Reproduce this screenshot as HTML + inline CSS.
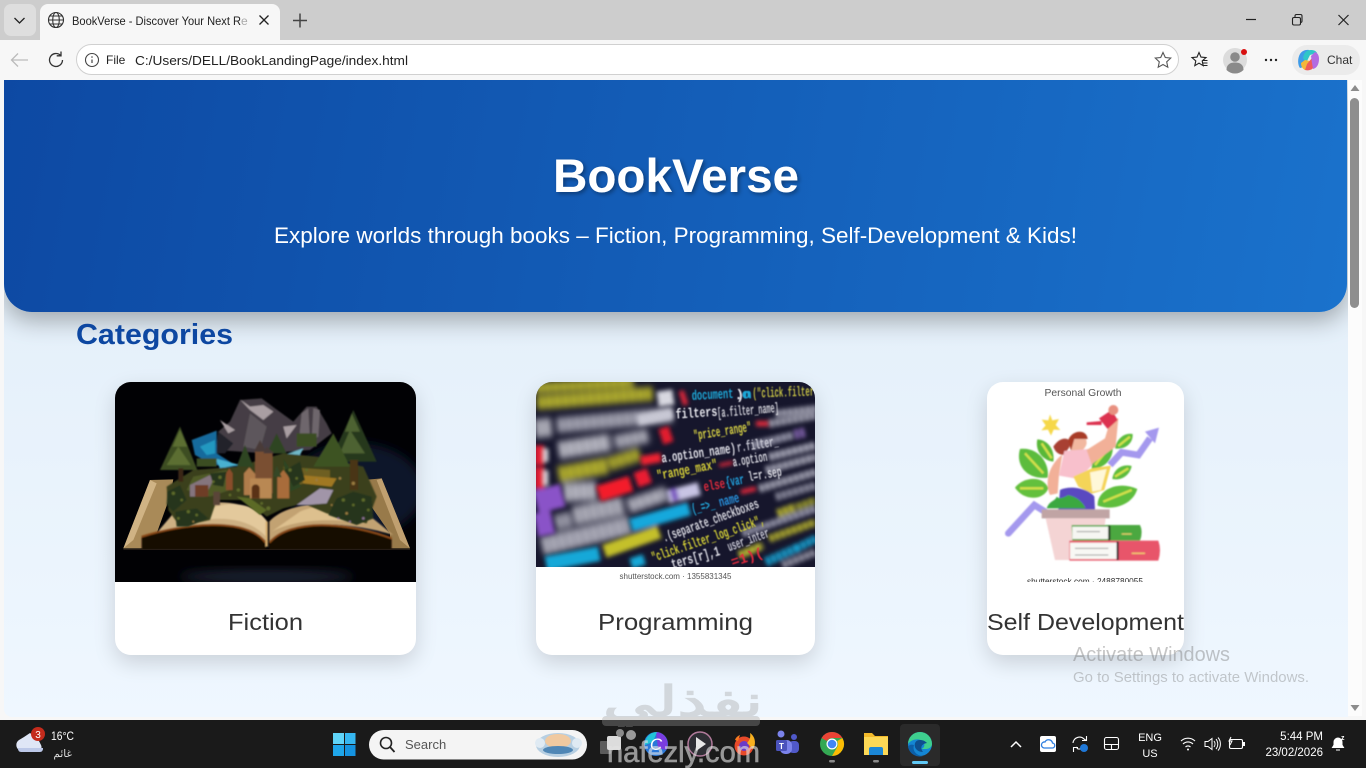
<!DOCTYPE html>
<html lang="en"><head><meta charset="utf-8"><title>BookVerse - Discover Your Next Read</title>
<style>
html,body{margin:0;padding:0;width:1366px;height:768px;overflow:hidden;background:#f7f7f7}
div{position:absolute;box-sizing:border-box}
svg{position:absolute;left:0;top:0}
text{font-family:"Liberation Sans","Noto Sans CJK SC",sans-serif}
.m text,text.m{font-family:"Liberation Mono",monospace;font-weight:700}
</style></head><body>
<div style="left:0;top:0;width:1366px;height:40px;background:#cdcdcd"></div>
<div style="left:0;top:40px;width:1366px;height:40px;background:#f7f7f7"></div>
<div style="left:4px;top:80px;width:1344px;height:637px;background:linear-gradient(180deg,#dfecf7,#eff7ff);border-radius:0 0 0 8px;overflow:hidden">
  <div style="left:0;top:0;width:1343px;height:232px;background:linear-gradient(100deg,#0d49a3,#1a72cc);border-radius:0 0 28px 28px;box-shadow:0 9px 24px rgba(0,0,0,.3)"></div>
</div>
<div style="left:115px;top:382px;width:301px;height:273px;background:#fff;border-radius:16px;box-shadow:0 8px 22px rgba(0,0,0,.15)"></div>
<div style="left:536px;top:382px;width:279px;height:273px;background:#fff;border-radius:16px;box-shadow:0 8px 22px rgba(0,0,0,.15)"></div>
<div style="left:987px;top:382px;width:197px;height:273px;background:#fff;border-radius:16px;box-shadow:0 8px 22px rgba(0,0,0,.15)"></div>
<div style="left:0;top:717px;width:1366px;height:3px;background:#f7f7f7"></div>
<div style="left:0;top:720px;width:1366px;height:48px;background:#1a1a1a"></div>

<svg width="1366" height="768" viewBox="0 0 1366 768">
<defs>
<clipPath id="c1"><path d="M115 582V398a16 16 0 0 1 16-16h269a16 16 0 0 1 16 16v184z"/></clipPath>
<clipPath id="c2"><path d="M536 567V398a16 16 0 0 1 16-16h247a16 16 0 0 1 16 16v169z"/></clipPath>
<clipPath id="c3"><rect x="987" y="382" width="197" height="200"/></clipPath>
<filter id="b0" x="-5%" y="-10%" width="110%" height="120%"><feGaussianBlur stdDeviation="2.500"/></filter>
<filter id="b1" x="-5%" y="-5%" width="110%" height="110%"><feGaussianBlur stdDeviation="2"/></filter>
<filter id="b2" x="-5%" y="-20%" width="110%" height="140%"><feGaussianBlur stdDeviation="10"/></filter>
<filter id="b3" x="-5%" y="-20%" width="110%" height="140%"><feGaussianBlur stdDeviation="6"/></filter>
<filter id="b4" x="-5%" y="-20%" width="110%" height="140%"><feGaussianBlur stdDeviation="1.500"/></filter>
<filter id="b9" x="-30%" y="-30%" width="160%" height="160%"><feGaussianBlur stdDeviation="16"/></filter>
<filter id="ts" x="-10%" y="-20%" width="120%" height="150%"><feDropShadow dx="2" dy="2" stdDeviation="2" flood-color="#000" flood-opacity=".35"/></filter>
</defs>

<!-- tab strip -->
<rect x="4" y="4" width="32" height="32" rx="7" fill="#dedede"/>
<path d="M14.500 18l5 5 5-5" fill="none" stroke="#222" stroke-width="1.300"/>
<path d="M40 40V12a8 8 0 0 1 8-8h224a8 8 0 0 1 8 8v28z" fill="#f7f7f7"/>
<g fill="none" stroke="#333" stroke-width="1.100"><circle cx="56" cy="20" r="7.500"/><ellipse cx="56" cy="20" rx="3.300" ry="7.500"/><path d="M48.500 20h15M49.500 16h13M49.500 24h13"/></g>
<text x="72" y="25" font-size="12" fill="#222" textLength="169" lengthAdjust="spacingAndGlyphs">BookVerse - Discover Your Next R</text>
<text x="241" y="25" font-size="12" fill="#aaa">e</text>
<path d="M259.500 15.500l9 9m0-9l-9 9" stroke="#222" stroke-width="1.300"/>
<path d="M300 13.500v14M293 20.500h14" stroke="#444" stroke-width="1.500"/>
<path d="M1246 19.500h10" stroke="#222" stroke-width="1.200"/>
<g fill="none" stroke="#222" stroke-width="1.100"><rect x="1292.500" y="17.500" width="8" height="7.500" rx="1.500"/><path d="M1295 17v-1a1.500 1.500 0 0 1 1.500-1.500h4a1.500 1.500 0 0 1 1.500 1.500v5a1.500 1.500 0 0 1-1.500 1.500"/></g>
<path d="M1338.500 15l10 10m0-10l-10 10" stroke="#222" stroke-width="1.200"/>

<!-- toolbar -->
<path d="M28 60H12m6-6.500L11.500 60l6.500 6.500" fill="none" stroke="#bbb" stroke-width="1.300"/>
<path d="M62.500 60a6.500 6.500 0 1 1-2-4.700M61 51.500v4.300h-4.300" fill="none" stroke="#333" stroke-width="1.300"/>
<rect x="76.500" y="44.500" width="1102" height="30" rx="15" fill="#fff" stroke="#d0d0d0"/>
<g fill="none" stroke="#444" stroke-width="1.100"><circle cx="92" cy="60" r="6.500"/></g><path d="M92 59.500v3.500" stroke="#444" stroke-width="1.200"/><circle cx="92" cy="57" r=".8" fill="#444"/>
<text x="106" y="64" font-size="12" fill="#222">File</text>
<text x="135" y="65" font-size="13" fill="#222" textLength="273" lengthAdjust="spacingAndGlyphs">C:/Users/DELL/BookLandingPage/index.html</text>
<path d="M1163 52.500l2.300 5 5.400.6-4 3.700 1.100 5.400-4.800-2.700-4.800 2.700 1.100-5.400-4-3.700 5.400-.6z" fill="none" stroke="#555" stroke-width="1.100"/>
<path d="M1199 52.500l2 4.600 5 .5-3.800 3.300 1 4.800-4.200-2.500-4.200 2.500 1-4.800-3.800-3.300 5-.5zM1203 60.500h4.500M1203 63h4.500M1203 65.500h4.500" fill="none" stroke="#222" stroke-width="1.100"/>
<circle cx="1235" cy="60" r="12" fill="#dcdcdc"/><circle cx="1235" cy="57" r="4.800" fill="#8a8a8a"/><path d="M1226.500 70c0-5.500 3.500-7.500 8.500-7.500s8.500 2 8.500 7.500a12 12 0 0 1-17 0z" fill="#8a8a8a"/>
<circle cx="1244" cy="52" r="3" fill="#d81010"/>
<circle cx="1266" cy="60" r="1.200" fill="#222"/><circle cx="1271" cy="60" r="1.200" fill="#222"/><circle cx="1276" cy="60" r="1.200" fill="#222"/>
<rect x="1292" y="45" width="68" height="30" rx="15" fill="#ebebeb"/>
<path d="M1300 68c-2.500-3-2.500-10 0-14 2-3 5-4.500 9-4l-4 9-1 8z" fill="#3f9be8"/><path d="M1303 58c1-5 3-8 8-8 3 0 5 1 6 3l-7 2-4 8z" fill="#2fc6c8"/><path d="M1301 63c0 4 2 6 4 7l3-1 2-8-5-1z" fill="#f4b63a"/><path d="M1305 70c4 1 8 0 10-5l-3-7-5 6z" fill="#ef5a5a"/><path d="M1311 56l4-4c3 1 4 4 4 7 0 5-2 9-6 10l-1-6z" fill="#b36ae2"/>
<text x="1327" y="64" font-size="12" fill="#333">Chat</text>

<!-- scrollbar -->
<rect x="1348" y="80" width="14" height="636" fill="#fcfcfc"/>
<path d="M1355 85l4.500 6h-9z" fill="#8c8c8c"/><path d="M1355 711l4.500-6h-9z" fill="#8c8c8c"/>
<rect x="1350" y="98" width="9" height="210" rx="4.500" fill="#8e8e8e"/>

<!-- hero text -->
<text x="553" y="192" font-size="47" font-weight="700" fill="#fff" textLength="246" lengthAdjust="spacingAndGlyphs" filter="url(#ts)">BookVerse</text>
<text x="274" y="243" font-size="22" fill="#fff" textLength="803" lengthAdjust="spacingAndGlyphs">Explore worlds through books – Fiction, Programming, Self-Development &amp; Kids!</text>
<text x="76" y="344" font-size="29" font-weight="700" fill="#0d47a1" textLength="157" lengthAdjust="spacingAndGlyphs">Categories</text>

<!-- fiction image -->
<g clip-path="url(#c1)">
<rect x="115" y="382" width="301" height="200" fill="#010104"/>
<g transform="translate(150 390) scale(.3333)">
<ellipse cx="620" cy="300" rx="200" ry="140" fill="#10182c" filter="url(#b9)"/>
<ellipse cx="350" cy="560" rx="260" ry="20" fill="#1a2232" filter="url(#b9)"/>
<!-- book -->
<path d="M-80 475L0 270 70 268 60 320 20 430-20 445V475z" fill="#a98a58"/>
<path d="M780 475L695 265 640 270 650 330 720 430 720 475z" fill="#987a4a"/>
<path d="M-80 475L0 270 20 280-50 450z" fill="#d0b384"/>
<path d="M780 475L695 265 680 270 750 450z" fill="#c0a070"/>
<g filter="url(#b0)">
<path d="M15 435L70 370C150 325 300 320 352 395L350 455C280 385 120 395 15 435z" fill="#cdb083"/>
<path d="M150 370C220 330 310 330 350 395L348 440C300 385 210 375 120 398z" fill="#e3c99c"/>
<path d="M730 435L650 370C560 325 410 335 358 395L358 455C420 385 600 395 730 435z" fill="#c2a272"/>
<path d="M450 365C520 335 600 350 640 400 560 385 440 385 365 425z" fill="#ddc08e"/>
<path d="M-25 478V440C100 400 290 380 347 458V478zM725 478V445C590 395 420 385 358 458V478z" fill="#160a04"/>
<path d="M-25 440C100 400 290 380 347 458M725 445C590 395 420 385 358 458" fill="none" stroke="#8a4a18" stroke-width="6"/>
<path d="M350 395V470" stroke="#d8b070" stroke-width="7"/>
</g>
<path d="M-80 478H780" stroke="#2a2018" stroke-width="3"/>
<g filter="url(#b0)">
<!-- mountains -->
<path d="M198 180L205 125 240 95 270 30 335 25 375 55 430 95 470 50 500 50 530 100 545 130 480 180 350 190z" fill="#443e44"/>
<path d="M270 28L300 50 340 45 370 65 340 90 300 60zM210 90L255 120 235 130zM400 110L440 105 410 145z" fill="#a99ea2"/>
<path d="M455 70L475 55 480 150 445 170zM490 55L510 60 505 140 485 150z" fill="#6e666c"/>
<path d="M205 125L250 160 225 190 198 190z" fill="#23212a"/>
<path d="M300 70L350 110 330 180 280 170z" fill="#5d565c"/>
<!-- water -->
<path d="M125 150L200 122 200 190 260 228 190 225 135 195z" fill="#176a9c"/>
<path d="M150 170L195 150 195 190 170 195z" fill="#2498c0"/>
<path d="M195 205L270 225 210 235z" fill="#4ab0d0"/>
<path d="M370 205L460 175 440 215 390 225z" fill="#6fb8c8"/>
<!-- land -->
<path d="M50 290L130 240 260 230 400 190 500 200 640 230 680 320 650 400 530 370 460 340 400 355 350 380 290 330 200 330 180 390 90 410 55 360z" fill="#3a3f1a"/>
<path d="M130 260L230 240 240 300 180 320 110 300z" fill="#4f5a26"/>
<path d="M400 230L540 240 540 290 460 280 410 300z" fill="#6e5e20"/>
<path d="M450 255L560 265 545 290 460 280z" fill="#a07822"/>
<path d="M120 285L180 255 190 270 165 320 120 320z" fill="#85747e"/>
<path d="M440 345L510 295 550 300 530 340 470 345z" fill="#a195a8"/>
<path d="M260 320L300 325 350 360 330 375z" fill="#5c6a28"/>
<!-- trees -->
<path d="M90 110L142 240 30 240z" fill="#3e4e24"/>
<path d="M90 120L112 170 68 170zM85 170L122 225 50 225z" fill="#5c6e30"/>
<path d="M85 235h15v40H85z" fill="#3a2812"/>
<path d="M610 60L680 215 540 215z" fill="#27391e"/>
<path d="M605 70L630 125 585 125zM600 120L645 190 570 190z" fill="#4e6230"/>
<path d="M600 210h24v90h-24z" fill="#4a3416"/>
<path d="M550 130L600 230 490 230z" fill="#3c5224"/>
<path d="M380 130L410 190 350 190zM285 165L310 230 260 230zM400 205L455 290 410 310z" fill="#2e4420"/>
<path d="M140 205h60v25h-60zM440 130h60v40h-60z" fill="#3a4e24"/>
<!-- castle -->
<path d="M315 185H368V310H315z" fill="#7a5030"/>
<path d="M330 150L348 185H312zM350 170L372 190H340z" fill="#4a3a38"/>
<path d="M282 250L298 232 316 252V315H282z" fill="#b07c4c"/>
<path d="M300 265H365V325H300z" fill="#b98852"/>
<path d="M305 325V295a12 12 0 0 1 24 0V325z" fill="#5a3018"/>
<path d="M382 262L400 240 418 262V325H382z" fill="#a86c3a"/>
<path d="M370 260L380 225 395 262z" fill="#354626"/>
<path d="M228 250L238 235 248 250V300H228z" fill="#8a4e2c"/>
<path d="M135 285h40v35h-40z" fill="#6e3c28"/>
<path d="M190 305h20v40h-20z" fill="#5a4438"/>
<!-- foliage clusters -->
<g fill="#26351a"><path d="M52 305L90 285 110 330 70 365 50 345z"/><path d="M75 365L140 355 175 385 115 410 80 410z"/><path d="M535 375L560 325 610 305 665 320 670 385 620 405z"/><path d="M405 240L450 215 465 270 430 290z"/><path d="M180 250L230 245 220 290 190 285z"/></g>
<g fill="#5e6c2a"><circle cx="70" cy="310" r="5"/><circle cx="95" cy="330" r="4"/><circle cx="115" cy="365" r="5"/><circle cx="140" cy="375" r="4"/><circle cx="85" cy="385" r="4"/><circle cx="210" cy="262" r="5"/><circle cx="190" cy="275" r="4"/><circle cx="580" cy="330" r="5"/><circle cx="610" cy="345" r="4"/><circle cx="640" cy="330" r="5"/><circle cx="655" cy="360" r="4"/><circle cx="420" cy="240" r="5"/><circle cx="440" cy="265" r="4"/><circle cx="265" cy="300" r="5"/><circle cx="355" cy="355" r="6"/><circle cx="335" cy="340" r="4"/><circle cx="470" cy="240" r="4"/><circle cx="240" cy="315" r="4"/></g>
<g fill="#9a7c40"><circle cx="590" cy="370" r="4"/><circle cx="610" cy="280" r="5"/><circle cx="570" cy="265" r="4"/><circle cx="130" cy="395" r="3"/><circle cx="500" cy="270" r="4"/><circle cx="545" cy="345" r="3"/></g>
<g fill="#8a7090"><circle cx="640" cy="385" r="4"/><circle cx="600" cy="395" r="3"/><circle cx="565" cy="385" r="3"/></g>
</g>
</g>
</g>
<text x="265.500" y="630" text-anchor="middle" font-size="23" fill="#333" textLength="75" lengthAdjust="spacingAndGlyphs">Fiction</text>

<!-- code image -->
<g clip-path="url(#c2)">
<rect x="536" y="382" width="279" height="186" fill="#16162c"/>
<g transform="translate(536 382) scale(.3333)" fill="none">
<g filter="url(#b2)" stroke-dasharray="19 6">
<path d="M0 18L290 0" stroke="#d6d22e" stroke-width="32"/>
<path d="M5 62L350 35" stroke="#d4d02c" stroke-width="42"/>
<path d="M0 140L50 135" stroke="#d4d4dc" stroke-width="56"/>
<path d="M65 130L410 98" stroke="#c0c0cc" stroke-width="46"/>
<path d="M70 205L225 180" stroke="#dadae2" stroke-width="52"/>
<path d="M240 180L340 160" stroke="#c8c8d2" stroke-width="42"/>
<path d="M70 278L215 250" stroke="#d4d02e" stroke-width="50"/>
<path d="M220 245L315 215" stroke="#c8c42c" stroke-width="42"/>
<path d="M85 332L180 326" stroke="#dadae2" stroke-width="56"/>
<path d="M115 402L265 370" stroke="#cfcfd8" stroke-width="56"/>
<path d="M60 422L110 410" stroke="#b8b8c4" stroke-width="46"/>
<path d="M280 372L390 335" stroke="#d2d2dc" stroke-width="44"/>
<path d="M20 492L280 430" stroke="#cdcdd8" stroke-width="56"/>
</g>
<g filter="url(#b3)">
<path d="M0 360L80 340" stroke="#8a52c8" stroke-width="70"/>
<path d="M0 430L50 420" stroke="#8a52c8" stroke-width="70"/>
<path d="M10 190V250M10 255V320" stroke="#e21e34" stroke-width="30"/>
<path d="M30 200V240M30 265V310" stroke="#d8d8de" stroke-width="14"/>
<path d="M30 545L190 515" stroke="#18a8d8" stroke-width="44"/>
<path d="M285 545L325 532" stroke="#18a8d8" stroke-width="32"/>
<path d="M188 335L285 305" stroke="#f41c2c" stroke-width="48"/>
<path d="M300 295L340 280" stroke="#ea1f30" stroke-width="46"/>
<path d="M315 237L375 226" stroke="#ee2030" stroke-width="28"/>
<path d="M375 165L405 155" stroke="#e21e2e" stroke-width="48"/>
<path d="M435 50L450 45" stroke="#e0263a" stroke-width="44"/>
<path d="M365 52L412 45" stroke="#d8d8e0" stroke-width="46"/>
<path d="M285 430L460 380" stroke="#18a8dc" stroke-width="40"/>
<path d="M205 508L370 450" stroke="#c4c02c" stroke-width="40"/>
<path d="M395 345L490 320" stroke="#c8c4e4" stroke-width="40"/>
<path d="M405 340L425 335" stroke="#7a58c0" stroke-width="40"/>
<path d="M305 115L410 95" stroke="#c8c8d4" stroke-width="32"/>
<path d="M660 125L700 125" stroke="#e02a3c" stroke-width="16"/>
<path d="M615 330L660 320" stroke="#e0263a" stroke-width="14"/>
<path d="M550 250L590 242" stroke="#e0263a" stroke-width="10"/>
</g>
<g filter="url(#b3)" stroke-dasharray="14 4">
<path d="M720 95L840 80" stroke="#a8a8b8" stroke-width="22"/>
<path d="M700 125L840 100" stroke="#a4a4b4" stroke-width="24"/>
<path d="M650 190L770 160" stroke="#9f9fb2" stroke-width="24"/>
<path d="M775 158L810 150" stroke="#7e60a8" stroke-width="30"/>
<path d="M700 225L840 190" stroke="#b0b0c0" stroke-width="24"/>
<path d="M690 265L840 225" stroke="#a8a8b8" stroke-width="24"/>
<path d="M670 320L840 270" stroke="#a8a8b8" stroke-width="24"/>
<path d="M720 345L840 310" stroke="#8e8ea0" stroke-width="24"/>
<path d="M725 395L780 375" stroke="#bcb830" stroke-width="26"/>
<path d="M785 375L840 355" stroke="#9a9a2c" stroke-width="24"/>
<path d="M620 455L840 380" stroke="#9c9cb0" stroke-width="22"/>
<path d="M700 470L840 420" stroke="#b2ae2e" stroke-width="24"/>
<path d="M690 540L780 500" stroke="#18a0d0" stroke-width="28"/>
<path d="M780 500L840 470" stroke="#18a0d0" stroke-width="26"/>
<path d="M740 550L840 510" stroke="#9898a8" stroke-width="22"/>
<path d="M610 520L680 490" stroke="#d0cc30" stroke-width="24"/>
</g>
<g class="m" filter="url(#b4)" stroke="none" font-size="42">
<text transform="translate(468 54) rotate(-3)" fill="#1fa8d8" textLength="125" lengthAdjust="spacingAndGlyphs">document</text>
<text transform="translate(595 52) rotate(-3)" fill="#e8e8ee" textLength="20">).</text>
<text transform="translate(618 50) rotate(-3)" fill="#1fa8d8" textLength="30">on</text>
<text transform="translate(650 47) rotate(-2)" fill="#c4c044" textLength="185" lengthAdjust="spacingAndGlyphs">("click.filter</text>
<text transform="translate(420 110) rotate(-4)" fill="#e8e8ee" textLength="125" lengthAdjust="spacingAndGlyphs">filters</text>
<text transform="translate(545 106) rotate(-5)" fill="#d0d0d8" textLength="185" lengthAdjust="spacingAndGlyphs">[a.filter_name]</text>
<text transform="translate(475 174) rotate(-9)" fill="#d8d244" textLength="175" lengthAdjust="spacingAndGlyphs">"price_range"</text>
<text transform="translate(378 242) rotate(-8)" fill="#e0e0e8" textLength="225" lengthAdjust="spacingAndGlyphs">a.option_name)</text>
<text transform="translate(605 210) rotate(-9)" fill="#c8c8d4" textLength="125" lengthAdjust="spacingAndGlyphs">r.filter_</text>
<text transform="translate(365 294) rotate(-11)" fill="#d4ce38" textLength="185" lengthAdjust="spacingAndGlyphs">"range_max"</text>
<text transform="translate(592 254) rotate(-10)" fill="#d8d8e0" textLength="105" lengthAdjust="spacingAndGlyphs">a.option</text>
<text transform="translate(505 328) rotate(-10)" fill="#e02a3c" textLength="65" lengthAdjust="spacingAndGlyphs">else</text>
<text transform="translate(572 314) rotate(-10)" fill="#20a0dc" textLength="55" lengthAdjust="spacingAndGlyphs">{var</text>
<text transform="translate(640 298) rotate(-10)" fill="#d8d8e0" textLength="100" lengthAdjust="spacingAndGlyphs">l=r.sep</text>
<text transform="translate(470 394) rotate(-13)" fill="#20a8dc" textLength="70" lengthAdjust="spacingAndGlyphs">(_=&gt;_</text>
<text transform="translate(552 374) rotate(-14)" fill="#2890dc" textLength="62" lengthAdjust="spacingAndGlyphs">name</text>
<text transform="translate(385 480) rotate(-20)" fill="#d8d8e0" textLength="305" lengthAdjust="spacingAndGlyphs">.(separate_checkboxes</text>
<text transform="translate(352 540) rotate(-19)" fill="#d4d036" textLength="355" lengthAdjust="spacingAndGlyphs">"click.filter_log_click",</text>
<text transform="translate(410 560) rotate(-16)" fill="#e0e0e8" textLength="150" lengthAdjust="spacingAndGlyphs">ters[r],1</text>
<text transform="translate(580 508) rotate(-20)" fill="#c8c8d4" textLength="130" lengthAdjust="spacingAndGlyphs">user_inter</text>
<text transform="translate(590 554) rotate(-18)" fill="#e02a3c" textLength="100" lengthAdjust="spacingAndGlyphs">=1)(</text>
</g>
</g>
</g>
<text x="675.500" y="579" text-anchor="middle" font-size="8.500" fill="#555" textLength="112" lengthAdjust="spacingAndGlyphs">shutterstock.com · 1355831345</text>
<text x="675.500" y="630" text-anchor="middle" font-size="23" fill="#333" textLength="155" lengthAdjust="spacingAndGlyphs">Programming</text>

<!-- self dev image -->
<text x="1083" y="396" text-anchor="middle" font-size="10.500" fill="#555" textLength="77" lengthAdjust="spacingAndGlyphs">Personal Growth</text>
<g transform="translate(975 375) scale(.3333)">
<g filter="url(#b1)">
<path d="M225 118l7 18 20-4-10 18 14 15-20-1-8 18-9-18-20 2 13-15-12-17 20 2z" fill="#f6d84a"/>
<path d="M100 475L178 390 210 410" fill="none" stroke="#a498ee" stroke-width="20" stroke-linecap="round"/>
<path d="M405 270L440 232 490 240 525 190" fill="none" stroke="#a498ee" stroke-width="20"/>
<path d="M510 170L552 158 540 205z" fill="#a498ee"/>
<path d="M135 222C190 215 225 265 218 308 160 315 120 275 135 222z" fill="#5cbc3c"/>
<path d="M120 338C145 305 205 300 220 340 205 378 145 378 120 338z" fill="#64c03c"/>
<path d="M187 193C220 195 240 225 235 260 200 255 180 225 187 193z" fill="#58b838"/>
<path d="M350 282C350 235 380 205 412 203 420 245 395 280 350 282z" fill="#5cbc3c"/>
<path d="M420 220C425 190 450 172 473 177 475 205 450 225 420 220z" fill="#5cbc3c"/>
<path d="M412 312C415 285 440 265 470 273 465 300 440 318 412 312z" fill="#5cbc3c"/>
<path d="M368 392C365 345 430 315 487 342 475 385 420 410 368 392z" fill="#5ebe3c"/>
<path d="M150 235L205 295M135 340H205M200 205L230 250M360 270L405 215M430 213L465 185M420 305L460 280M385 380L470 345" stroke="#d4e04c" stroke-width="7" fill="none"/>
<path d="M235 215C255 185 280 185 290 205L268 240C250 240 240 230 235 215z" fill="#a84030"/>
<path d="M282 190C300 165 335 170 335 205 330 230 300 240 285 220z" fill="#f2b8a0"/>
<path d="M280 195C290 165 335 160 338 192L298 192 288 228z" fill="#a83a28"/>
<path d="M268 228L342 222 352 270 310 312 252 302z" fill="#f8c0cc"/>
<path d="M262 238C222 270 208 320 225 360L248 355 252 300z" fill="#f2b098"/>
<path d="M335 225L390 190 408 130 430 130 422 215 350 268z" fill="#f2b098"/>
<path d="M372 130L410 105 428 135 398 162zM335 142L380 138 380 150 335 150z" fill="#dc3050"/>
<circle cx="415" cy="105" r="15" fill="#e89080"/>
<path d="M295 305L350 280 408 272 388 345 350 356 310 335z" fill="#f4d458"/>
<path d="M345 292L395 282 378 345 352 350z" fill="#fff8d8"/>
<path d="M255 345C285 330 340 340 358 365L360 405H250z" fill="#5a48c0"/>
<path d="M215 400C225 375 240 380 245 365 255 375 270 365 280 360 300 365 320 375 332 400z" fill="#3aa840"/>
<path d="M200 403H404V430H200z" fill="#c0a4a4"/>
<path d="M212 430H392L375 555H240z" fill="#f4d4d4"/>
<path d="M290 450H495Q505 470 495 497H292z" fill="#4ca840"/>
<path d="M292 455H400V492H292z" fill="#f6f6f2"/>
<path d="M283 497H550Q560 525 550 557H283z" fill="#e8546a"/>
<path d="M285 503H425V552H285z" fill="#f8f8f4"/>
<path d="M425 500h6v55h-6zM400 452h6v44h-6z" fill="#222"/>
<path d="M305 470h70M300 520h100M300 540h100" stroke="#9a9a9a" stroke-width="3"/>
<path d="M440 477h30M470 535h40" stroke="#f0d070" stroke-width="4"/>
</g>
</g>
<g clip-path="url(#c3)"><text x="1085" y="584.500" text-anchor="middle" font-size="9" fill="#333" textLength="116" lengthAdjust="spacingAndGlyphs">shutterstock.com · 2488780055</text></g>
<text x="1085.500" y="630" text-anchor="middle" font-size="23" fill="#333" textLength="197" lengthAdjust="spacingAndGlyphs">Self Development</text>

<!-- activate -->
<text x="1073" y="661" font-size="20" fill="#777" opacity=".42" textLength="157" lengthAdjust="spacingAndGlyphs">Activate Windows</text>
<text x="1073" y="682" font-size="14.500" fill="#777" opacity=".38" textLength="236" lengthAdjust="spacingAndGlyphs">Go to Settings to activate Windows.</text>

<!-- taskbar left -->
<path d="M19 750a6 6 0 0 1 0-10l5-3 6-4 8 6 3 6a5 5 0 0 1-3 7H24z" fill="#dfe6f6"/>
<path d="M18 748h25v1a3 3 0 0 1-3 3H21a3 3 0 0 1-3-3z" fill="#bcc8e8"/>
<circle cx="38" cy="734" r="7" fill="#c42b1c"/>
<text x="38" y="738" text-anchor="middle" font-size="10" fill="#fff">3</text>
<text x="51" y="740" font-size="11.500" fill="#fff" textLength="23" lengthAdjust="spacingAndGlyphs">16°C</text>
<text x="72" y="757" text-anchor="end" font-size="10.500" fill="#ddd">غائم</text>
<g><rect x="333" y="733" width="11" height="11" fill="#5fd4f8"/><rect x="345" y="733" width="10.500" height="11" fill="#35b6f0"/><rect x="333" y="745" width="11" height="11" fill="#1fa6ea"/><rect x="345" y="745" width="10.500" height="11" fill="#1593e0"/></g>
<rect x="369" y="730" width="218" height="29.500" rx="14.700" fill="#f4f4f4"/>
<circle cx="386" cy="743" r="5.500" fill="none" stroke="#222" stroke-width="1.600"/><path d="M390 747l4.500 5" stroke="#222" stroke-width="1.800"/>
<text x="405" y="749" font-size="13" fill="#555">Search</text>
<ellipse cx="558" cy="745" rx="22" ry="12" fill="#b7cfe2"/><ellipse cx="558" cy="741" rx="13" ry="7" fill="#f0c9a0"/><ellipse cx="558" cy="750" rx="15" ry="4" fill="#4f86b5"/><circle cx="540" cy="743" r="5" fill="#dfeaf3"/><circle cx="577" cy="743" r="5" fill="#dfeaf3"/>

<!-- taskbar apps -->
<rect x="600" y="741" width="11" height="13" rx="1" fill="#5c5c5c"/><rect x="607" y="736" width="14" height="14" rx="2" fill="#dcdcdc"/><circle cx="620" cy="733" r="4" fill="#8a8a8a"/><circle cx="631" cy="735" r="5" fill="#9a9a9a"/>
<circle cx="656" cy="744" r="12" fill="#2a78d8"/><path d="M656 732a12 12 0 0 1 10 18l-8-2z" fill="#7a3ce0"/><path d="M645 745a12 12 0 0 1 12-13l-4 10z" fill="#22c4d8"/>
<text x="656" y="750" text-anchor="middle" font-size="17" font-style="italic" fill="#fff">C</text>
<circle cx="700" cy="744" r="12" fill="#2e2e34" stroke="#b07a9a" stroke-width="1.500"/><path d="M696 737l10 7-10 7z" fill="#e8e8e8"/>
<circle cx="744" cy="746" r="9.500" fill="#e84a2a"/><circle cx="744" cy="746" r="5" fill="#6a3ac8"/><path d="M750 733c6 4 6 12 3 16l-6-6c2-2 4-5 3-10z" fill="#f8b020"/><path d="M735 740c1-3 3-4 5-5l-2 6z" fill="#f87a20"/>
<circle cx="781" cy="734" r="3.500" fill="#7b83eb"/><circle cx="794" cy="737" r="3" fill="#5059c9"/><rect x="789" y="741" width="10" height="12" rx="4" fill="#5059c9"/><rect x="780" y="740" width="12" height="14" rx="5" fill="#7b83eb"/><rect x="776" y="740" width="11" height="11" rx="1.500" fill="#4b53bc"/>
<text x="781.500" y="749" text-anchor="middle" font-size="8" font-weight="700" fill="#fff">T</text>
<circle cx="832" cy="744" r="12" fill="#34a853"/><path d="M832 732a12 12 0 0 1 10.400 6H832a6 6 0 0 0-5.200 3l-5.200-3A12 12 0 0 1 832 732z" fill="#ea4335"/><path d="M842.400 738a12 12 0 0 1-10.400 18l5.200-9a6 6 0 0 0 0-6z" fill="#fbbc04"/><circle cx="832" cy="744" r="5.500" fill="#fff"/><circle cx="832" cy="744" r="4.300" fill="#4285f4"/>
<rect x="829" y="760" width="6" height="2.500" rx="1.200" fill="#8a8a8a"/>
<path d="M864 733h8l3 3h13v19h-24z" fill="#f2b92a"/><rect x="864" y="737" width="24" height="18" fill="#fcd856"/><path d="M869 755v-6a2 2 0 0 1 2-2h10a2 2 0 0 1 2 2v6z" fill="#1b87d6"/>
<rect x="873" y="760" width="6" height="2.500" rx="1.200" fill="#8a8a8a"/>
<rect x="900" y="724" width="40" height="42" rx="4" fill="#2a2a2a"/>
<circle cx="920" cy="744" r="12" fill="#1486d4"/><path d="M908 744a12 12 0 0 1 24 0c0 3-3 5-6 5h-5c3-1 4-3 3-6-2-5-12-5-16 1z" fill="#3ecf8e"/><path d="M914 745c-2 6 3 11 9 11a12 12 0 0 1-15-9c1-2 3-3 6-2z" fill="#0c5fa8"/><path d="M920 740c-4 0-6 3-5 7 1 3 4 5 8 5-3-4-2-8 4-9-2-2-4-3-7-3z" fill="#0e4f8e"/>
<rect x="912" y="761" width="16" height="3" rx="1.500" fill="#5fc8f5"/>

<!-- tray -->
<path d="M1011 747l5-5 5 5" fill="none" stroke="#fff" stroke-width="1.500"/>
<rect x="1040" y="736" width="16" height="16" rx="2" fill="#fff"/><path d="M1044 748h8a2.500 2.500 0 0 0 .5-5 4 4 0 0 0-7.500-1 3 3 0 0 0-1 6z" fill="none" stroke="#2f7fe0" stroke-width="1.300"/>
<path d="M1073 743a6.500 6.500 0 0 1 11-4l2 1.500M1086.500 736v4.500H1082M1083 749h-5l-2-2M1073.500 752v-4.500H1078" fill="none" stroke="#fff" stroke-width="1.100"/>
<circle cx="1084" cy="748" r="4" fill="#1f78d8"/>
<g fill="none" stroke="#fff" stroke-width="1.100"><rect x="1104.500" y="737.500" width="14" height="12" rx="2"/><path d="M1104.500 744.500h14M1111.500 744.500v5"/></g>
<text x="1150" y="741" text-anchor="middle" font-size="11" fill="#fff">ENG</text>
<text x="1150" y="757" text-anchor="middle" font-size="11" fill="#fff">US</text>
<g fill="none" stroke="#fff" stroke-width="1.100"><path d="M1181 741a10 10 0 0 1 14 0M1183 744a7 7 0 0 1 10 0M1185.500 747a3.500 3.500 0 0 1 5 0"/></g><circle cx="1188" cy="749.500" r="1" fill="#fff"/>
<path d="M1205 741.500h3l4-3v11l-4-3h-3zM1214 741a5 5 0 0 1 0 6M1216 739a8 8 0 0 1 0 10M1218 737.500a10 10 0 0 1 0 13" fill="none" stroke="#fff" stroke-width="1"/>
<rect x="1229.500" y="739.500" width="13" height="9" rx="1.500" fill="none" stroke="#fff" stroke-width="1.100"/><rect x="1243" y="742" width="2" height="4" fill="#fff"/><path d="M1231 737l-2 4h3l-2 4" fill="none" stroke="#fff"/>
<text x="1323" y="740" text-anchor="end" font-size="11.500" fill="#fff">5:44 PM</text>
<text x="1323" y="756" text-anchor="end" font-size="11.500" fill="#fff">23/02/2026</text>
<path d="M1338 738a4 4 0 0 0-4 4v3l-1.500 2.500h11l-1.500-2.500v-3a4 4 0 0 0-4-4zM1336 750h4" fill="#fff" stroke="#fff"/>
<text x="1341" y="740" font-size="7" font-weight="700" fill="#fff">z</text>

<!-- watermark -->
<g opacity=".34" fill="#9c9c9c">
<text x="683" y="716" text-anchor="middle" font-size="42" font-weight="700" textLength="160" lengthAdjust="spacingAndGlyphs">نفذلي</text>
<rect x="602" y="716" width="158" height="10" rx="4"/>
</g>
<text x="607" y="762" font-size="30" fill="#e4e4e4" stroke="#e4e4e4" stroke-width=".6" opacity=".62" textLength="153" lengthAdjust="spacingAndGlyphs">nafezly.com</text>
</svg>
</body></html>
